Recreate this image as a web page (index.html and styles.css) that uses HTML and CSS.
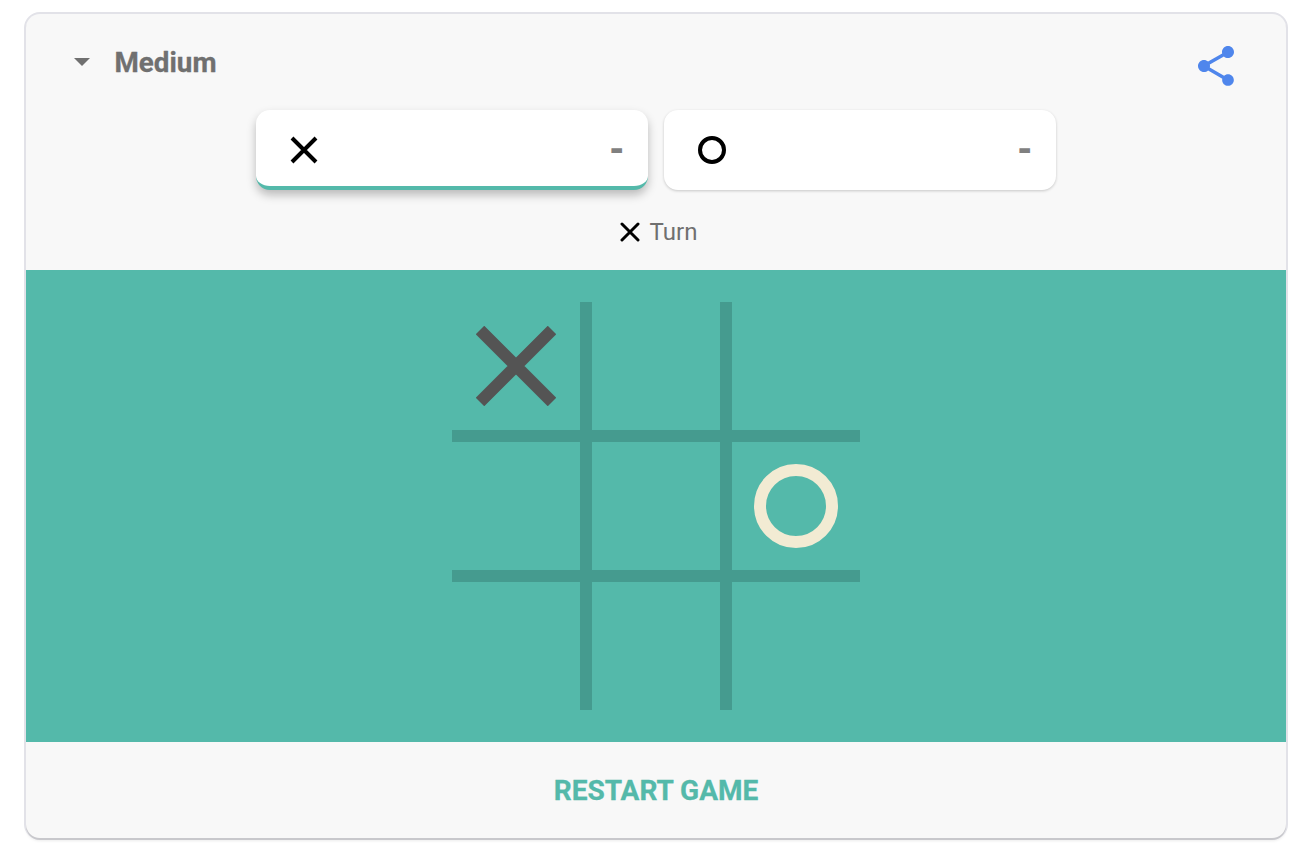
FILE: index.html
```html
<!DOCTYPE html>
<html>
<head>
    <title>Tic Tac Toe</title>
    <link rel="stylesheet" href="styles.css">
</head>
<body>
    <div class="card">
        <div class="top">
            <div class="header">
                <div class="level">
                    <svg class="arrow" viewBox="0 0 16 8"><path d="M0 0h16L8 8z"/></svg>
                    <span>Medium</span>
                </div>
                <svg class="share" viewBox="0 0 24 24"><path d="M18 16.08c-.76 0-1.44.3-1.96.77L8.91 12.7c.05-.23.09-.46.09-.7s-.04-.47-.09-.7l7.05-4.11c.54.5 1.25.81 2.04.81 1.66 0 3-1.34 3-3s-1.34-3-3-3-3 1.34-3 3c0 .24.04.47.09.7L8.04 9.81C7.5 9.31 6.79 9 6 9c-1.66 0-3 1.34-3 3s1.34 3 3 3c.79 0 1.5-.31 2.04-.81l7.12 4.16c-.05.21-.08.43-.08.65 0 1.61 1.31 2.92 2.92 2.92s2.92-1.31 2.92-2.92-1.31-2.92-2.92-2.92z"/></svg>
            </div>
            <div class="players">
                <div class="player active">
                    <svg class="mark" viewBox="0 0 28 28"><path d="M2 2l24 24M26 2L2 26"/></svg>
                    <span class="score">-</span>
                </div>
                <div class="player">
                    <svg class="mark" viewBox="0 0 28 28"><circle cx="14" cy="14" r="12"/></svg>
                    <span class="score">-</span>
                </div>
            </div>
            <div class="turn">
                <svg class="turn-mark" viewBox="0 0 20 20"><path d="M2 2l16 16M18 2L2 18"/></svg>
                <span>Turn</span>
            </div>
        </div>
        <div class="game">
            <div class="board">
                <div class="cell">
                    <svg class="piece" viewBox="0 0 80 80"><path class="x" d="M4 4l72 72M76 4L4 76"/></svg>
                </div>
                <div class="cell"></div>
                <div class="cell"></div>
                <div class="cell"></div>
                <div class="cell"></div>
                <div class="cell">
                    <svg class="piece piece-o" viewBox="0 0 84 84"><circle class="o" cx="42" cy="42" r="36"/></svg>
                </div>
                <div class="cell"></div>
                <div class="cell"></div>
                <div class="cell"></div>
            </div>
        </div>
        <div class="footer">RESTART GAME</div>
    </div>
</body>
</html>
```

FILE: styles.css
```css
body {
    margin: 0;
    padding: 14px 0 10px 26px;
    background-color: #fff;
    font-family: Roboto, sans-serif;
}
.card {
    width: 1260px;
    background-color: #f8f8f8;
    border-radius: 14px;
    box-shadow: 0 2px 0 0 #c8c8cc, 0 0 0 2px #e2e2e8, 0 3px 3px rgba(0, 0, 0, 0.08);
    overflow: hidden;
}
.top {
    height: 256px;
    display: flex;
    flex-direction: column;
}
.header {
    height: 96px;
    padding: 0 46px 0 48px;
    display: flex;
    justify-content: space-between;
    align-items: center;
}
.level {
    display: flex;
    align-items: center;
    font-size: 27.8px;
    font-weight: 700;
    color: #707070;
    -webkit-text-stroke: 0.3px #707070;
}
.arrow {
    width: 16px;
    height: 8px;
    margin-right: 24.5px;
    fill: #707070;
}
.share {
    width: 48px;
    height: 48px;
    margin-top: 8px;
    fill: #4f86ec;
}
.players {
    display: flex;
    justify-content: center;
    gap: 16px;
}
.player {
    width: 392px;
    height: 80px;
    box-sizing: border-box;
    padding: 0 23px 0 34px;
    display: flex;
    justify-content: space-between;
    align-items: center;
    background-color: #fff;
    border-radius: 14px;
    box-shadow: 0 1px 3px rgba(0, 0, 0, 0.2);
}
.player.active {
    border-bottom: 4px solid #54b9aa;
    padding-top: 4px;
    box-shadow: 0 5px 10px rgba(0, 0, 0, 0.25);
}
.mark {
    width: 28px;
    height: 28px;
    fill: none;
    stroke: #000;
    stroke-width: 4;
}
.score {
    font-size: 36px;
    font-weight: 900;
    line-height: 36px;
    color: #808080;
}
.turn {
    margin-top: 28px;
    padding-left: 5px;
    display: flex;
    justify-content: center;
    align-items: center;
    gap: 10px;
    font-size: 24px;
    line-height: 28px;
    color: #707070;
}
.turn-mark {
    width: 20px;
    height: 20px;
    stroke: #000;
    stroke-width: 3;
    stroke-linecap: round;
}
.game {
    height: 472px;
    display: flex;
    justify-content: center;
    align-items: center;
    background-color: #54b9aa;
}
.board {
    display: grid;
    grid-template-columns: repeat(3, 128px);
    grid-template-rows: repeat(3, 128px);
    gap: 12px;
    background-color: #459b8f;
}
.cell {
    display: flex;
    justify-content: center;
    align-items: center;
    background-color: #54b9aa;
}
.piece {
    width: 80px;
    height: 80px;
}
.piece-o {
    width: 84px;
    height: 84px;
}
.x {
    stroke: #545454;
    stroke-width: 12;
}
.o {
    fill: none;
    stroke: #f2ebd3;
    stroke-width: 12;
}
.footer {
    height: 96px;
    display: flex;
    justify-content: center;
    align-items: center;
    font-size: 28px;
    font-weight: 700;
    color: #54b9aa;
    -webkit-text-stroke: 0.3px #54b9aa;
}
```
